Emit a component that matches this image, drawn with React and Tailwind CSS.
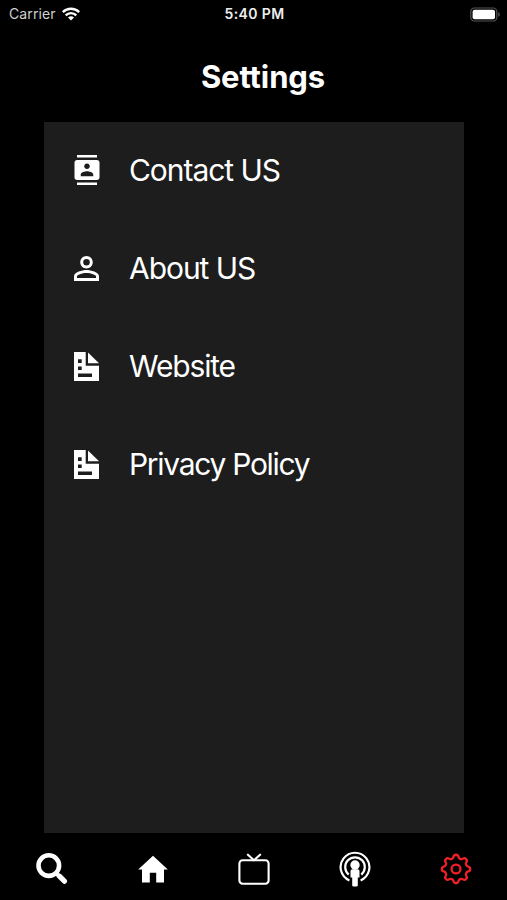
import React, { useState } from 'react';
import { MdContacts } from 'react-icons/md';

const WifiIcon = () => (
  <svg width="18" height="14" viewBox="0 0 18 14" fill="none" stroke="#fff" strokeWidth="2.4">
    <path d="M0.8 5.1a11.6 11.6 0 0 1 16.4 0" />
    <path d="M3.7 8.3a7.5 7.5 0 0 1 10.6 0" />
    <path d="M9 13.6 6 10.6a4.3 4.3 0 0 1 6 0Z" fill="#fff" stroke="none" />
  </svg>
);

const BatteryIcon = () => (
  <svg width="30" height="15" viewBox="0 0 30 15">
    <rect x="0.8" y="1" width="26" height="13" rx="3.6" fill="none" stroke="#545454" strokeWidth="1.2" />
    <rect x="2.6" y="2.8" width="22.4" height="9.4" rx="2" fill="#fff" />
    <path d="M28.2 5.3a2.3 2.3 0 0 1 0 4.4Z" fill="#545454" />
  </svg>
);

const PersonIcon = () => (
  <svg width="25" height="25" viewBox="4 4 16 16" fill="currentColor">
    <path d="M12 5.9a2.1 2.1 0 1 1 0 4.2 2.1 2.1 0 0 1 0-4.2m0 9c2.97 0 6.1 1.46 6.1 2.1v1.1H5.9V17c0-.64 3.13-2.1 6.1-2.1M12 4C9.79 4 8 5.79 8 8s1.79 4 4 4 4-1.79 4-4-1.79-4-4-4m0 9c-2.67 0-8 1.34-8 4v3h16v-3c0-2.66-5.33-4-8-4" />
  </svg>
);

const PageIcon = () => (
  <svg width="26" height="29" viewBox="0 0 26 29" fill="currentColor" fillRule="evenodd">
    <path d="M0 0h11.7v13.7H25V29H0ZM4 7.3V11h3.7V7.3ZM4 14.4V18h3.7v-3.6ZM4 21.4V25h14v-3.6Z" />
    <path d="M14 .4 25 11.3H14Z" />
  </svg>
);

const SearchIcon = () => (
  <svg width="32" height="32" viewBox="0 0 32 32" fill="none" stroke="currentColor" strokeWidth="4.6">
    <circle cx="12.8" cy="12.6" r="10.3" />
    <path d="m20 20 2.8 2.8" strokeWidth="4" />
    <path d="m23.4 23.2 5 5" strokeWidth="5.2" strokeLinecap="round" />
  </svg>
);

const HomeIcon = () => (
  <svg width="30" height="32" viewBox="0 0 30 32" fill="currentColor">
    <path d="M15 2.8 29.8 16.500H26v13h-7.800V19.800h-6.400v9.700H4v-13H.2Z" />
  </svg>
);

const TvIcon = () => (
  <svg width="32" height="32" viewBox="0 0 32 32" fill="none" stroke="currentColor" strokeWidth="2.1" strokeLinecap="round" strokeLinejoin="round">
    <rect x="1.4" y="7.3" width="29.2" height="23.4" rx="3.2" />
    <path d="M9.9 1.7 16 7.2l6.1-5.5" />
  </svg>
);

const PodcastIcon = () => (
  <svg width="32" height="36" viewBox="0 0 32 36" fill="none" stroke="currentColor" strokeWidth="2.2">
    <path d="M10.4 29.4a14.4 14.4 0 1 1 11.2 0" />
    <path d="M9.7 23.6a9.8 9.8 0 1 1 12.6 0" />
    <g fill="currentColor" stroke="none">
      <circle cx="16" cy="14" r="4.7" />
      <path d="M13.3 18.2h5.4a1.8 1.8 0 0 1 1.8 1.8v6.6h-1.7v7.6a1.4 1.4 0 0 1-1.4 1.4h-2.8a1.4 1.4 0 0 1-1.4-1.4v-7.6h-1.7V20a1.8 1.8 0 0 1 1.8-1.8Z" />
    </g>
  </svg>
);

const GearIcon = () => (
  <svg width="32" height="32" viewBox="0 0 32 32" fill="none" stroke="currentColor" strokeWidth="2.3">
    <path d="M13.58 3.84A2.45 2.45 0 0 1 18.42 3.84A3 3 0 0 0 22.89 5.69A2.45 2.45 0 0 1 26.31 9.11A3 3 0 0 0 28.16 13.58A2.45 2.45 0 0 1 28.16 18.42A3 3 0 0 0 26.31 22.89A2.45 2.45 0 0 1 22.89 26.31A3 3 0 0 0 18.42 28.16A2.45 2.45 0 0 1 13.58 28.16A3 3 0 0 0 9.11 26.31A2.45 2.45 0 0 1 5.69 22.89A3 3 0 0 0 3.84 18.42A2.45 2.45 0 0 1 3.84 13.58A3 3 0 0 0 5.69 9.11A2.45 2.45 0 0 1 9.11 5.69A3 3 0 0 0 13.58 3.84Z" />
    <circle cx="16" cy="16" r="4.4" />
  </svg>
);

const menuItems = [
  { label: 'Contact US', icon: <MdContacts size={30} />, tracking: 'tracking-[-1.05px]' },
  { label: 'About US', icon: <PersonIcon />, tracking: 'tracking-[-1.05px]' },
  { label: 'Website', icon: <PageIcon />, tracking: 'tracking-[-1.15px]' },
  { label: 'Privacy Policy', icon: <PageIcon />, tracking: 'tracking-[-1.3px]' },
];

const tabs = [
  { name: 'Search', icon: <SearchIcon /> },
  { name: 'Home', icon: <HomeIcon /> },
  { name: 'TV', icon: <TvIcon /> },
  { name: 'Podcasts', icon: <PodcastIcon /> },
  { name: 'Settings', icon: <GearIcon /> },
];

const App = () => {
  const [activeTab, setActiveTab] = useState('Settings');

  return (
    <div className="flex h-[900px] w-full flex-col overflow-hidden bg-black font-['Inter','Liberation_Sans',sans-serif] text-white">
      <div className="grid h-7 shrink-0 grid-cols-3 items-center pl-[9px] pr-[7px] text-sm">
        <div className="flex items-center gap-1.5 text-[#d0d0d0]">
          <span className="tracking-[0.1px]">Carrier</span>
          <WifiIcon />
        </div>
        <span className="text-center font-semibold tracking-[0.4px] text-[#eee]">5:40 PM</span>
        <div className="flex justify-end">
          <BatteryIcon />
        </div>
      </div>

      <header className="flex h-[94px] shrink-0 items-center justify-center pl-[19px] pt-[3px]">
        <h1 className="text-[31px] font-bold leading-9 tracking-[-0.1px]">Settings</h1>
      </header>

      <main className="ml-11 mr-[43px] h-[711px] shrink-0 bg-[#1d1d1d]">
        <ul>
          {menuItems.map((item) => (
            <li key={item.label} className="flex h-[98px] items-center pb-0.5">
              <span className="ml-[27px] flex w-[31px] justify-center">{item.icon}</span>
              <span className={`ml-[27px] whitespace-nowrap text-[30px] leading-9 ${item.tracking}`}>{item.label}</span>
            </li>
          ))}
        </ul>
      </main>

      <nav className="ml-px grid h-[67px] shrink-0 grid-cols-5 pt-[5px]">
        {tabs.map((tab) => (
          <button
            key={tab.name}
            aria-label={tab.name}
            onClick={() => setActiveTab(tab.name)}
            className={`flex items-center justify-center ${activeTab === tab.name ? 'text-[#ef2027]' : 'text-white'}`}
          >
            {tab.icon}
          </button>
        ))}
      </nav>
    </div>
  );
};

export default App;
